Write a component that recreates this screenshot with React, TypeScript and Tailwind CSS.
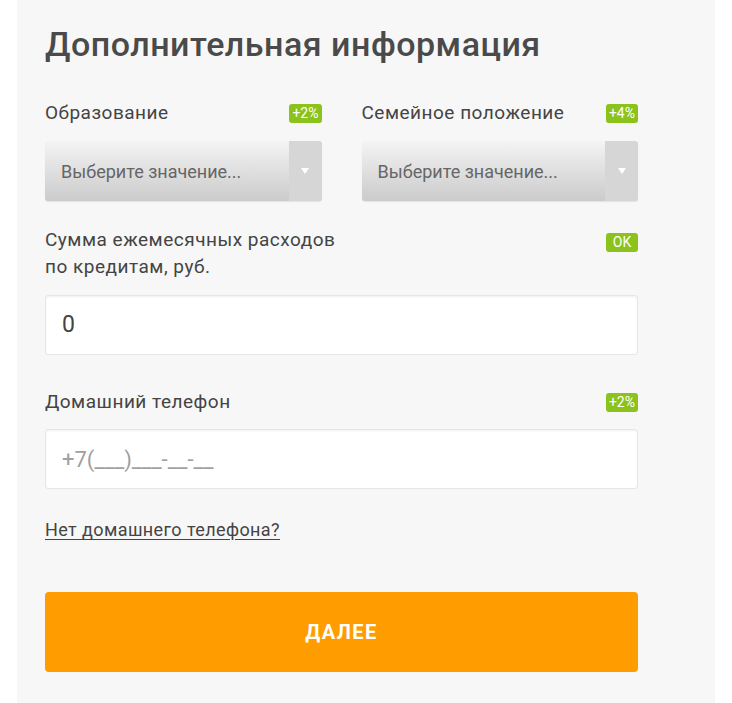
import React from "react";

const font = { fontFamily: "Roboto, 'Liberation Sans', sans-serif" };

function Badge({ children }: { children: React.ReactNode }) {
  return (
    <span className="inline-flex h-[19px] min-w-[32px] items-center justify-center rounded-[3px] bg-[#8bc21c] px-[3px] text-[14px] leading-none text-white">
      {children}
    </span>
  );
}

function FakeSelect() {
  return (
    <div className="flex h-[60px] overflow-hidden rounded-[3px] bg-gradient-to-b from-[#f4f4f4] to-[#cbcbcb] shadow-[0_1px_1px_rgba(0,0,0,0.08)]">
      <div className="flex flex-1 items-center pl-[16px] text-[18px] text-[#666]">Выберите значение...</div>
      <div className="flex w-[33px] items-center justify-center bg-[#d6d6d6]">
        <svg width="8" height="6" viewBox="0 0 8 6">
          <path d="M0 0h8L4 6z" fill="#fff" />
        </svg>
      </div>
    </div>
  );
}

export default function App() {
  return (
    <div className="min-h-[703px] bg-white" style={font}>
      <div className="ml-[17px] min-h-[703px] w-[698px] bg-[#f7f7f7] pl-[28px] pr-[77px] pt-[22px]">
        <h1 className="text-[34px] font-medium leading-[44px] tracking-[0.5px] text-[#4a4a4a]">Дополнительная информация</h1>

        {/* Selects */}
        <div className="mt-[35px] grid grid-cols-2 gap-x-[40px]">
          <div>
            <div className="flex h-[24px] items-center justify-between">
              <span className="text-[19px] tracking-[0.5px] text-[#444]">Образование</span>
              <Badge>+2%</Badge>
            </div>
            <div className="mt-[16px]">
              <FakeSelect />
            </div>
          </div>
          <div>
            <div className="flex h-[24px] items-center justify-between">
              <span className="text-[19px] tracking-[0.5px] text-[#444]">Семейное положение</span>
              <Badge>+4%</Badge>
            </div>
            <div className="mt-[16px]">
              <FakeSelect />
            </div>
          </div>
        </div>

        {/* Credit expenses */}
        <div className="mt-[25px] flex items-start justify-between">
          <span className="text-[19px] leading-[27px] tracking-[0.5px] text-[#444]">
            Сумма ежемесячных расходов
            <br />
            по кредитам, руб.
          </span>
          <span className="mt-[4px]">
            <Badge>OK</Badge>
          </span>
        </div>
        <div className="mt-[15px] flex h-[60px] items-center rounded-[3px] border border-[#e6e6e6] bg-white pl-[16px] text-[23px] text-[#444] shadow-[inset_0_1px_2px_rgba(0,0,0,0.06)]">
          0
        </div>

        {/* Home phone */}
        <div className="mt-[35px] flex h-[24px] items-center justify-between">
          <span className="text-[19px] tracking-[0.5px] text-[#444]">Домашний телефон</span>
          <Badge>+2%</Badge>
        </div>
        <div className="mt-[15px] flex h-[60px] items-center rounded-[3px] border border-[#e6e6e6] bg-white pl-[16px] text-[22px] text-[#a0a0a0] shadow-[inset_0_1px_2px_rgba(0,0,0,0.06)]">
          +7(___)___-__-__
        </div>

        <div className="mt-[27px]">
          <a href="#" className="text-[18px] tracking-[0.4px] text-[#444] underline underline-offset-[3px]">
            Нет домашнего телефона?
          </a>
        </div>

        <button className="mt-[49px] flex h-[80px] w-full items-center justify-center rounded-[4px] bg-[#ff9d00] text-[20px] font-bold tracking-[1.4px] text-white">
          ДАЛЕЕ
        </button>
      </div>
    </div>
  );
}
